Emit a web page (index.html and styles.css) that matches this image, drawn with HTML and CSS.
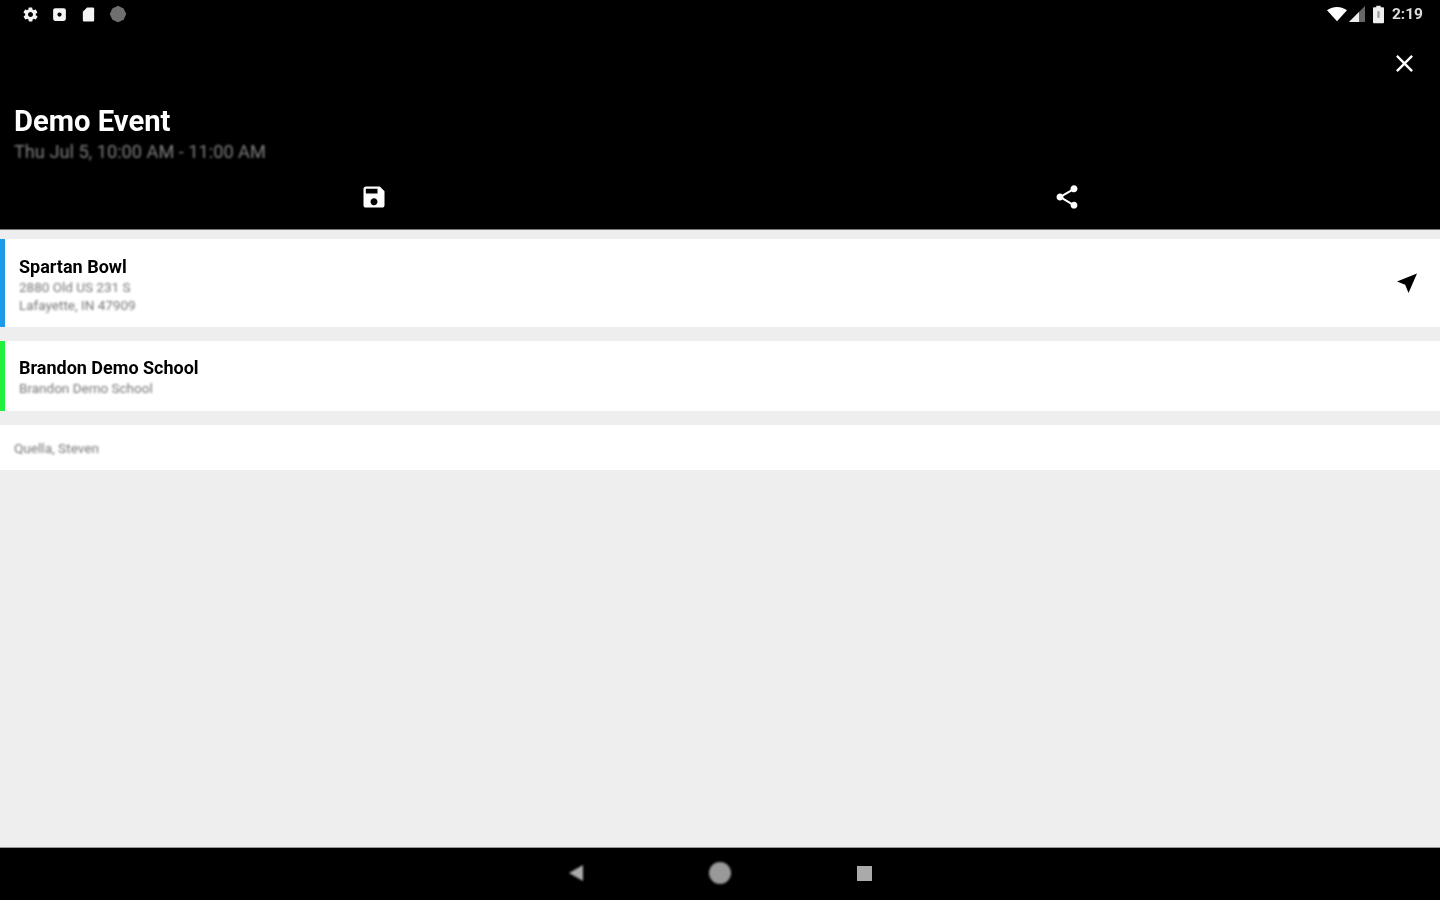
FILE: index.html
```html
<!DOCTYPE html>
<html lang="en">
<head>
    <meta charset="UTF-8">
    <meta name="viewport" content="width=device-width, initial-scale=1.0">
    <title>Demo Event</title>
    <link rel="stylesheet" href="styles.css">
</head>

<body>
    <!-- status bar + event header -->
    <header class="header">
        <div class="status-bar">
            <div class="status-left">
                <svg class="status-icon" viewBox="0 0 24 24"><path d="M19.4 13c0-.3.1-.6.1-1s0-.7-.1-1l2.100-1.600c.2-.2.2-.4.1-.6l-2-3.500c-.1-.2-.4-.3-.6-.2l-2.500 1c-.5-.4-1.100-.7-1.700-1l-.4-2.600c0-.3-.2-.4-.5-.4h-4c-.3 0-.5.2-.5.400l-.4 2.600c-.6.3-1.200.6-1.700 1l-2.500-1c-.2-.1-.5 0-.6.200l-2 3.500c-.1.200-.1.500.1.600L4.600 11c0 .3-.1.700-.1 1s0 .7.1 1l-2.100 1.600c-.2.2-.2.4-.1.6l2 3.500c.1.200.4.300.6.200l2.500-1c.5.400 1.100.700 1.700 1l.4 2.600c0 .3.200.4.500.4h4c.3 0 .5-.2.5-.4l.4-2.600c.6-.3 1.200-.6 1.700-1l2.500 1c.2.100.5 0 .6-.2l2-3.500c.1-.2.1-.4-.1-.6L19.400 13zM12 15.500c-1.900 0-3.500-1.600-3.500-3.500s1.600-3.500 3.500-3.500 3.500 1.600 3.500 3.500-1.600 3.500-3.500 3.500z"/></svg>
                <svg class="status-icon" viewBox="0 0 24 24"><path d="M6 3h12a3 3 0 0 1 3 3v12a3 3 0 0 1-3 3H6a3 3 0 0 1-3-3V6a3 3 0 0 1 3-3zm6 6a3 3 0 1 0 0 6 3 3 0 0 0 0-6z"/></svg>
                <svg class="status-icon" viewBox="0 0 24 24"><path d="M18 2h-8L4 8v12c0 1.100.9 2 2 2h12c1.100 0 2-.9 2-2V4c0-1.100-.9-2-2-2z"/></svg>
                <svg class="status-icon dim" viewBox="0 0 24 24"><path d="M12 1l7.500 3.500L23 12l-3.500 7.500L12 23l-7.500-3.500L1 12l3.500-7.500z"/></svg>
            </div>
            <div class="status-right">
                <svg class="wifi" viewBox="0 0 24 18"><path d="M12 17L0 4c3-2.500 7.300-4 12-4s9 1.500 12 4z"/></svg>
                <svg class="signal" viewBox="0 0 16 16"><path class="signal-bg" d="M16 0v16H0z"/><path d="M10 6v10H0z"/></svg>
                <svg class="battery" viewBox="0 0 10 16"><path d="M3 0h4v1.500h2c.6 0 1 .4 1 1V15c0 .6-.4 1-1 1H1c-.6 0-1-.4-1-1V2.500c0-.6.4-1 1-1h2z"/><path class="battery-mark" d="M4 5h2v6H4z"/></svg>
                <span class="clock">2:19</span>
            </div>
        </div>

        <div class="close-row">
            <svg class="close-icon" viewBox="0 0 24 24"><path d="M19 6.410L17.590 5 12 10.590 6.410 5 5 6.410 10.590 12 5 17.590 6.410 19 12 13.410 17.590 19 19 17.590 13.410 12z"/></svg>
        </div>

        <div class="event-info">
            <h1 class="event-title">Demo Event</h1>
            <p class="event-time">Thu Jul 5, 10:00 AM - 11:00 AM</p>
        </div>

        <div class="actions">
            <div class="action">
                <svg class="action-icon" viewBox="0 0 24 24"><path d="M17 3H5c-1.110 0-2 .9-2 2v14c0 1.100.89 2 2 2h14c1.100 0 2-.9 2-2V7l-4-4zm-5 16c-1.660 0-3-1.340-3-3s1.340-3 3-3 3 1.340 3 3-1.340 3-3 3zm3-10H5V5h10v4z"/></svg>
            </div>
            <div class="action">
                <svg class="action-icon" viewBox="0 0 24 24"><path d="M18 16.080c-.76 0-1.440.3-1.960.77L8.910 12.700c.05-.23.09-.46.09-.7s-.04-.47-.09-.7l7.050-4.110c.54.5 1.250.81 2.040.81 1.660 0 3-1.340 3-3s-1.340-3-3-3-3 1.340-3 3c0 .24.04.47.09.7L8.040 9.810C7.500 9.310 6.790 9 6 9c-1.660 0-3 1.340-3 3s1.340 3 3 3c.79 0 1.500-.31 2.040-.81l7.120 4.160c-.05.21-.08.43-.08.65 0 1.610 1.310 2.920 2.920 2.920s2.920-1.310 2.920-2.920-1.310-2.920-2.920-2.920z"/></svg>
            </div>
        </div>
    </header>

    <main class="content">
        <!-- location -->
        <section class="card card-blue card-location">
            <div class="card-text">
                <h2 class="card-title">Spartan Bowl</h2>
                <p class="card-sub">2880 Old US 231 S</p>
                <p class="card-sub">Lafayette, IN 47909</p>
            </div>
            <svg class="nav-arrow" viewBox="0 0 24 24"><path d="M22 2.500L2 10.500l8.200 3.200L13.500 22z"/></svg>
        </section>

        <!-- school -->
        <section class="card card-green card-school">
            <div class="card-text">
                <h2 class="card-title">Brandon Demo School</h2>
                <p class="card-sub">Brandon Demo School</p>
            </div>
        </section>

        <section class="person"><span class="person-name">Quella, Steven</span></section>
    </main>

    <footer class="nav-bar">
        <span class="nav-back"></span>
        <span class="nav-home"></span>
        <span class="nav-recent"></span>
    </footer>
</body>
</html>
```

FILE: styles.css
```css
html, body {
    margin: 0;
    height: 100%;
}

body {
    display: flex;
    flex-direction: column;
    height: 900px;
    overflow: hidden;
    background: #eeeeee;
    font-family: Roboto, "Liberation Sans", sans-serif;
}

h1, h2, p {
    margin: 0;
}

/* header */
.header {
    height: 229px;
    background: #000;
    color: #fff;
    display: flex;
    flex-direction: column;
    border-bottom: 1px solid #777;
}

.status-bar {
    height: 28px;
    display: flex;
    justify-content: space-between;
    align-items: center;
    padding: 0 17px 0 22px;
}

.status-left, .status-right {
    display: flex;
    align-items: center;
}

.status-left {
    gap: 12px;
}

.status-icon {
    width: 17px;
    height: 17px;
    fill: #f4f4f4;
    filter: blur(0.6px);
}

.status-icon.dim {
    width: 18px;
    height: 18px;
    fill: #6f6f6f;
}

.status-right {
    filter: blur(0.7px);
}

.wifi {
    width: 20px;
    height: 15px;
    fill: #fff;
}

.signal {
    width: 16px;
    height: 16px;
    margin-left: 2px;
    fill: #eee;
}

.signal-bg {
    fill: #666;
}

.battery {
    width: 11px;
    height: 19px;
    margin-left: 8px;
    fill: #eee;
}

.battery-mark {
    fill: #999;
}

.clock {
    margin-left: 8px;
    font-size: 15.5px;
    font-weight: 700;
    color: #ddd;
}

.close-row {
    height: 42px;
    display: flex;
    justify-content: flex-end;
    align-items: center;
    padding-right: 21px;
    margin-top: 14px;
}

.close-icon {
    width: 29px;
    height: 29px;
    fill: #fff;
    filter: blur(0.5px);
}

.event-info {
    padding-left: 14px;
    margin-top: 20px;
}

.event-title {
    font-size: 29.2px;
    line-height: 34px;
    font-weight: 700;
    filter: blur(0.7px);
}

.event-time {
    font-size: 18.2px;
    line-height: 24px;
    margin-top: 2px;
    color: #7d7d7d;
    filter: blur(0.9px);
}

.actions {
    display: flex;
    margin-top: 18px;
    flex: 1;
}

.action {
    flex: 1;
    display: flex;
    justify-content: center;
    height: 29px;
    align-items: center;
}

.action:first-child {
    padding-left: 27px;
}

.action:last-child {
    padding-right: 27px;
}

.action-icon {
    width: 28px;
    height: 28px;
    fill: #fff;
    filter: blur(0.6px);
}

/* cards */
.content {
    flex: 1;
    padding-top: 9px;
    display: flex;
    flex-direction: column;
    gap: 14px;
}

.card {
    background: #fff;
    display: flex;
    align-items: center;
    justify-content: space-between;
    padding-left: 14px;
    border-left: 5px solid #1e9be8;
}

.card-green {
    border-left-color: #22f03c;
}

.card-location {
    height: 88px;
}

.card-location .card-text {
    padding-top: 2px;
}

.card-school {
    height: 70px;
}

.card-title {
    font-size: 18px;
    line-height: 23px;
    font-weight: 700;
    color: #000;
    filter: blur(0.7px);
}

.card-sub {
    font-size: 13.5px;
    line-height: 18px;
    color: #777;
    filter: blur(0.9px);
}

.nav-arrow {
    width: 24px;
    height: 24px;
    margin-right: 21px;
    fill: #000;
    filter: blur(0.6px);
}

.person {
    background: #fff;
    height: 45px;
    line-height: 47px;
    padding-left: 14px;
    font-size: 13.6px;
    color: #777;
}

.person-name {
    display: inline-block;
    filter: blur(0.9px);
}

/* android nav bar */
.nav-bar {
    height: 50px;
    padding-bottom: 2px;
    background: #000;
    border-top: 1px solid #999;
    display: flex;
    justify-content: center;
    align-items: center;
    gap: 126px;
}

.nav-back {
    width: 0;
    height: 0;
    border-top: 8px solid transparent;
    border-bottom: 8px solid transparent;
    border-right: 14px solid #aaa;
    filter: blur(0.8px);
}

.nav-home {
    width: 22px;
    height: 22px;
    border-radius: 50%;
    background: #999;
    filter: blur(1px);
}

.nav-recent {
    width: 15px;
    height: 15px;
    background: #aaa;
    filter: blur(0.7px);
}
```
